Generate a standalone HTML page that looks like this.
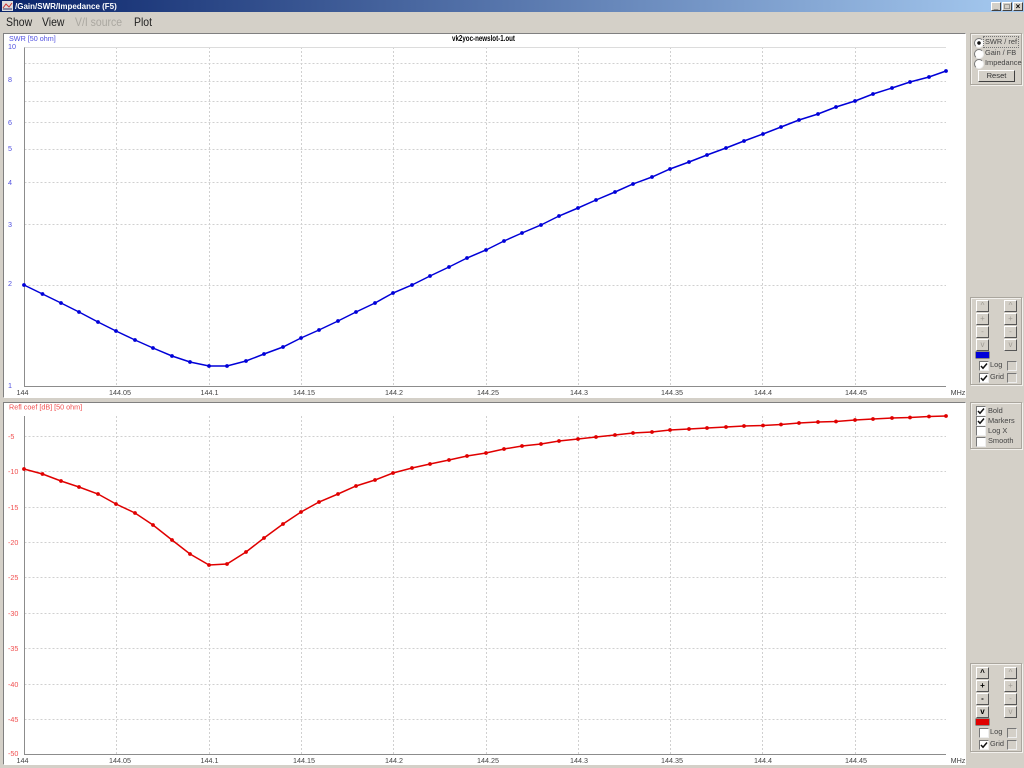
<!DOCTYPE html>
<html><head><meta charset="utf-8"><style>
html,body{margin:0;padding:0}
body{width:1024px;height:768px;overflow:hidden;background:#d4d0c8;position:relative;font-family:"Liberation Sans",sans-serif;color:#000}
.a{position:absolute;white-space:nowrap}
#tb{left:0;top:0;width:1024px;height:12px;background:linear-gradient(90deg,#0a246a,#a6caf0)}
.m{font-size:12px;top:15px;color:#222;transform:scaleX(.87);transform-origin:left top}
.wb{top:2px;width:10px;height:9px;background:#d4d0c8;border:1px solid;border-color:#fff #404040 #404040 #fff;box-sizing:border-box;font:bold 8px/7px "Liberation Sans",sans-serif;text-align:center}
.pl{left:3px;width:963px;background:#fff;border:1px solid;border-color:#808080 #fff #fff #808080;box-sizing:border-box}
.g{box-sizing:border-box;border:1px solid #aaa69e;box-shadow:inset 1px 1px 0 #f2f0ec,1px 1px 0 #f2f0ec}
.t{font-size:7.4px;line-height:10px;color:#444}
.b{width:13px;height:12px;box-sizing:border-box;background:#d4d0c8;border:1px solid;border-color:#fff #555 #555 #fff;font:8px/9px "Liberation Sans",sans-serif;text-align:center;color:#a09c94}
.b.on{color:#000;font-weight:bold}
.c{width:10px;height:10px;box-sizing:border-box;background:#fff;border:1px solid;border-color:#777 #eee #eee #777;overflow:hidden}
.c svg{display:block}
.c.d{background:#d4d0c8}
.r{width:10px;height:10px;border-radius:50%;background:#fff;box-sizing:border-box;border:1px solid;border-color:#777 #eee #eee #777}
svg text{font-family:"Liberation Sans",sans-serif;font-size:7.2px}
</style></head><body>
<div class="a" id="tb"></div>
<svg class="a" style="left:2px;top:1px" width="11" height="10"><rect width="11" height="10" fill="#ddd"/><path d="M1 7L4 3L7 6L10 2" stroke="#c33" fill="none"/><path d="M1 8h9" stroke="#336"/></svg>
<div class="a" style="left:15px;top:1px;font:bold 8px/11px 'Liberation Sans',sans-serif;color:#fff">/Gain/SWR/Impedance (F5)</div>
<div class="a wb" style="left:991px">_</div><div class="a wb" style="left:1002px">&#9633;</div><div class="a wb" style="left:1013px">&#215;</div>
<div class="a m" style="left:6px">Show</div><div class="a m" style="left:42px">View</div><div class="a m" style="left:75px;color:#aaa7a0">V/I source</div><div class="a m" style="left:134px">Plot</div>

<div class="a pl" style="top:33px;height:365px"></div>
<div class="a pl" style="top:402px;height:363px"></div>

<svg class="a" style="left:0;top:0" width="1024" height="768">
<defs>
<marker id="mb" markerUnits="userSpaceOnUse" markerWidth="6" markerHeight="6" refX="3" refY="3"><circle cx="3" cy="3" r="1.9" fill="#0000d8"/></marker>
<marker id="mr" markerUnits="userSpaceOnUse" markerWidth="6" markerHeight="6" refX="3" refY="3"><circle cx="3" cy="3" r="1.9" fill="#e00000"/></marker>
</defs>
<g stroke="#d0d0d0" stroke-width="1" stroke-dasharray="2 2" fill="none">
<path d="M24.5 63.5H946M24.5 81.5H946M24.5 101.5H946M24.5 122.5H946M24.5 149.5H946M24.5 182.5H946M24.5 224.5H946M24.5 285.5H946"/>
<path d="M116.5 47V386M209.5 47V386M301.5 47V386M393.5 47V386M486.5 47V386M578.5 47V386M670.5 47V386M762.5 47V386M855.5 47V386"/>
<path d="M24.5 436.5H946M24.5 471.5H946M24.5 507.5H946M24.5 542.5H946M24.5 577.5H946M24.5 613.5H946M24.5 648.5H946M24.5 684.5H946M24.5 719.5H946"/>
<path d="M116.5 416V754M209.5 416V754M301.5 416V754M393.5 416V754M486.5 416V754M578.5 416V754M670.5 416V754M762.5 416V754M855.5 416V754"/>
</g>
<g stroke="#8c8c8c" fill="none"><path d="M24.5 47V386.5H946"/><path d="M24.5 416V754.5H946"/></g>
<path d="M24.5 47.5H946" stroke="#dcdcdc" fill="none"/>

<polyline fill="none" stroke="#0000d8" stroke-width="1.5" marker-start="url(#mb)" marker-mid="url(#mb)" marker-end="url(#mb)" points="24,285 42.5,294 61,303 79,312 98,322 116,331 135,340 153,348 172,356 190,362 209,366 227,366 246,361 264,354 283,347 301,338 319,330 338,321 356,312 375,303 393,293 412,285 430,276 449,267 467,258 486,250 504,241 522,233 541,225 559,216 578,208 596,200 615,192 633,184 652,177 670,169 689,162 707,155 726,148 744,141 763,134 781,127 799,120 818,114 836,107 855,101 873,94 892,88 910,82 929,77 946,71"/>
<polyline fill="none" stroke="#e00000" stroke-width="1.5" marker-start="url(#mr)" marker-mid="url(#mr)" marker-end="url(#mr)" points="24,469 42.5,474 61,481 79,487 98,494 116,504 135,513 153,525 172,540 190,554 209,565 227,564 246,552 264,538 283,524 301,512 319,502 338,494 356,486 375,480 393,473 412,468 430,464 449,460 467,456 486,453 504,449 522,446 541,444 559,441 578,439 596,437 615,435 633,433 652,432 670,430 689,429 707,428 726,427 744,426 763,425.5 781,424.5 799,423 818,422 836,421.5 855,420 873,419 892,418 910,417.5 929,416.5 946,416"/>

<g fill="#5050e0">
<text x="9" y="41">SWR [50 ohm]</text>
<text x="8" y="49">10</text><text x="8" y="82">8</text><text x="8" y="125">6</text><text x="8" y="151">5</text><text x="8" y="185">4</text><text x="8" y="227">3</text><text x="8" y="286">2</text><text x="8" y="388">1</text>
</g>
<g fill="#f05050">
<text x="9" y="409.5">Refl coef [dB] [50 ohm]</text>
<text x="8" y="439">-5</text><text x="8" y="474">-10</text><text x="8" y="510">-15</text><text x="8" y="545">-20</text><text x="8" y="580">-25</text><text x="8" y="616">-30</text><text x="8" y="651">-35</text><text x="8" y="687">-40</text><text x="8" y="722">-45</text><text x="8" y="756">-50</text>
</g>
<g fill="#444" text-anchor="middle">
<text x="22.5" y="395">144</text><text x="120" y="395">144.05</text><text x="209.5" y="395">144.1</text><text x="304" y="395">144.15</text><text x="394" y="395">144.2</text><text x="488" y="395">144.25</text><text x="579" y="395">144.3</text><text x="672" y="395">144.35</text><text x="763" y="395">144.4</text><text x="856" y="395">144.45</text><text x="958" y="395">MHz</text>
<text x="22.5" y="763">144</text><text x="120" y="763">144.05</text><text x="209.5" y="763">144.1</text><text x="304" y="763">144.15</text><text x="394" y="763">144.2</text><text x="488" y="763">144.25</text><text x="579" y="763">144.3</text><text x="672" y="763">144.35</text><text x="763" y="763">144.4</text><text x="856" y="763">144.45</text><text x="958" y="763">MHz</text>
<text x="483.5" y="41" fill="#000" textLength="63" lengthAdjust="spacingAndGlyphs" style="font-weight:bold;font-size:8px">vk2yoc-newslot-1.out</text>
</g>
</svg>

<div class="a g" style="left:970px;top:33px;width:52px;height:52px"></div>
<div class="a r" style="left:974px;top:38px;background:radial-gradient(circle,#111 0 1.6px,#fff 2px)"></div>
<div class="a t" style="left:984px;top:37px;outline:1px dotted #777;line-height:10px;padding:0 1px">SWR / ref</div>
<div class="a r" style="left:974px;top:49px"></div><div class="a t" style="left:985px;top:48px">Gain / FB</div>
<div class="a r" style="left:974px;top:59px"></div><div class="a t" style="left:985px;top:58px">Impedance</div>
<div class="a b" style="left:978px;top:70px;width:37px;height:12px;color:#333;font:7.6px/10px 'Liberation Sans',sans-serif;border-color:#fff #404040 #404040 #fff">Reset</div>

<div class="a g" style="left:970px;top:297px;width:52px;height:88px"></div>
<div class="a b" style="left:976px;top:300px">^</div><div class="a b" style="left:1004px;top:300px">^</div>
<div class="a b" style="left:976px;top:313px">+</div><div class="a b" style="left:1004px;top:313px">+</div>
<div class="a b" style="left:976px;top:326px">-</div><div class="a b" style="left:1004px;top:326px">-</div>
<div class="a b" style="left:976px;top:339px">v</div><div class="a b" style="left:1004px;top:339px">v</div>
<div class="a" style="left:976px;top:352px;width:13px;height:6px;background:#0000d8;box-shadow:0 0 0 .5px #444"></div>
<div class="a c" style="left:979px;top:361px"><svg width="8" height="8"><path d="M1 4L3 6.2L7 1.5" fill="none" stroke="#111" stroke-width="1.5"/></svg></div><div class="a t" style="left:990px;top:360px">Log</div><div class="a c d" style="left:1007px;top:361px"></div>
<div class="a c" style="left:979px;top:373px"><svg width="8" height="8"><path d="M1 4L3 6.2L7 1.5" fill="none" stroke="#111" stroke-width="1.5"/></svg></div><div class="a t" style="left:990px;top:372px">Grid</div><div class="a c d" style="left:1007px;top:373px"></div>

<div class="a g" style="left:970px;top:402px;width:52px;height:47px"></div>
<div class="a c" style="left:976px;top:406px"><svg width="8" height="8"><path d="M1 4L3 6.2L7 1.5" fill="none" stroke="#111" stroke-width="1.5"/></svg></div><div class="a t" style="left:988px;top:406px">Bold</div>
<div class="a c" style="left:976px;top:416px"><svg width="8" height="8"><path d="M1 4L3 6.2L7 1.5" fill="none" stroke="#111" stroke-width="1.5"/></svg></div><div class="a t" style="left:988px;top:416px">Markers</div>
<div class="a c" style="left:976px;top:426px"></div><div class="a t" style="left:988px;top:426px">Log X</div>
<div class="a c" style="left:976px;top:437px"></div><div class="a t" style="left:988px;top:436px">Smooth</div>

<div class="a g" style="left:970px;top:663px;width:52px;height:89px"></div>
<div class="a b on" style="left:976px;top:667px">^</div><div class="a b" style="left:1004px;top:667px">^</div>
<div class="a b on" style="left:976px;top:680px">+</div><div class="a b" style="left:1004px;top:680px">+</div>
<div class="a b on" style="left:976px;top:693px">-</div><div class="a b" style="left:1004px;top:693px">-</div>
<div class="a b on" style="left:976px;top:706px">v</div><div class="a b" style="left:1004px;top:706px">v</div>
<div class="a" style="left:976px;top:719px;width:13px;height:6px;background:#e00000;box-shadow:0 0 0 .5px #444"></div>
<div class="a c" style="left:979px;top:728px"></div><div class="a t" style="left:990px;top:727px">Log</div><div class="a c d" style="left:1007px;top:728px"></div>
<div class="a c" style="left:979px;top:740px"><svg width="8" height="8"><path d="M1 4L3 6.2L7 1.5" fill="none" stroke="#111" stroke-width="1.5"/></svg></div><div class="a t" style="left:990px;top:739px">Grid</div><div class="a c d" style="left:1007px;top:740px"></div>
</body></html>
